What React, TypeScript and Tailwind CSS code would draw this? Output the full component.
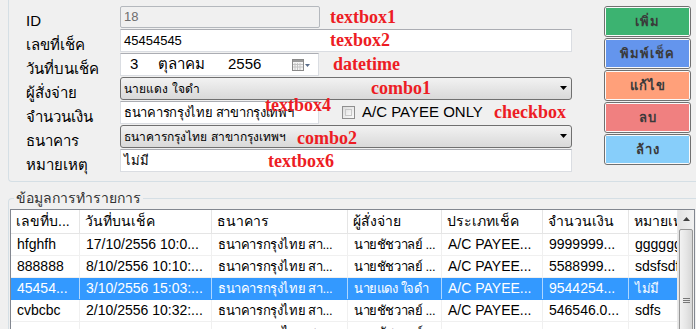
import { ReactNode } from 'react';

const FONT = { fontFamily: '"Liberation Sans", Tahoma, sans-serif' };

type Row = string[];

const columns = [
  { title: 'เลขที่บ...', w: 'w-[69px]' },
  { title: 'วันที่บนเช็ค', w: 'w-[132px]' },
  { title: 'ธนาคาร', w: 'w-[136px]' },
  { title: 'ผู้สั่งจ่าย', w: 'w-[94px]' },
  { title: 'ประเภทเช็ค', w: 'w-[101px]' },
  { title: 'จำนวนเงิน', w: 'w-[86px]' },
  { title: 'หมายเหตุ', w: 'w-[90px]' },
];

const rows: Row[] = [
  ['hfghfh', '17/10/2556 10:0...', 'ธนาคารกรุงไทย สา...', 'นายชัชวาลย์ ...', 'A/C PAYEE...', '9999999...', 'gggggg'],
  ['888888', '8/10/2556 10:10:...', 'ธนาคารกรุงไทย สา...', 'นายชัชวาลย์ ...', 'A/C PAYEE...', '5588999...', 'sdsfsdf'],
  ['45454...', '3/10/2556 15:03:...', 'ธนาคารกรุงไทย สา...', 'นายแดง ใจดำ', 'A/C PAYEE...', '9544254...', 'ไม่มี'],
  ['cvbcbc', '2/10/2556 10:32:...', 'ธนาคารกรุงไทย สา...', 'นายชัชวาลย์ ...', 'A/C PAYEE...', '546546.0...', 'sdfs'],
  ['', '', 'ธนาคารกรุงไทย สา...', 'นายชัชวาลย์ ...', '', '', ''],
];

const isThai = (s: string) => /[\u0E00-\u0E7F]/.test(s);

function FieldRow({ label, children }: { label: string; children: ReactNode }) {
  return (
    <div className="flex items-center h-[23px]">
      <div className="w-[94px] text-[15px] leading-[15px] pt-[7px] text-black whitespace-nowrap">{label}</div>
      {children}
    </div>
  );
}

function Combo({ text }: { text: string }) {
  return (
    <div className="w-[452px] h-[23px] flex items-center justify-between border border-[#707070] rounded-[3px] bg-gradient-to-b from-[#f2f2f2] to-[#d9d9d9] pl-[3px] pr-[3px]">
      <span className="text-[12px] text-black" style={{ fontFamily: 'Tahoma, "DejaVu Sans", sans-serif' }}>
        {text}
      </span>
      <svg width="8" height="5" viewBox="0 0 8 5">
        <path d="M0 0h7l-3.5 4z" fill="#000" />
      </svg>
    </div>
  );
}

function ActionButton({ label, color }: { label: string; color: string }) {
  return (
    <div className="h-[31px] border border-[#707070] rounded-[3px] p-[1px] bg-[#fafafa]">
      <div className={`h-full flex items-center justify-center ${color}`}>
        <span className="text-[13px] font-bold text-[#3a3a3a] tracking-[1px]">{label}</span>
      </div>
    </div>
  );
}

function Note({ text, className }: { text: string; className: string }) {
  return (
    <span
      className={`absolute text-[18px] leading-[18px] font-bold text-[#ed1c24] ${className}`}
      style={{ fontFamily: '"Liberation Serif", serif' }}
    >
      {text}
    </span>
  );
}

export default function App() {
  return (
    <div className="relative w-[696px] h-[329px] bg-[#f0f0f0] overflow-hidden" style={FONT}>
      {/* top group */}
      <div className="ml-[8px] h-[182px] border-l border-b border-[#d5dfe5] rounded-bl-[4px] flex pl-[17px] pt-[5px]">
        <div className="flex flex-col gap-[1px] w-[546px]">
          <FieldRow label="ID">
            <div className="w-[200px] h-[22px] border border-[#b4b8bd] rounded-[2px] bg-[#f0f0f0] flex items-center px-[3px] text-[13px] text-[#6d6d6d]">
              18
            </div>
          </FieldRow>
          <FieldRow label="เลขที่เช็ค">
            <div className="w-[452px] h-[23px] border border-[#dadde2] border-t-[#abadb3] bg-white flex items-center px-[3px] text-[13px] text-black">
              45454545
            </div>
          </FieldRow>
          <FieldRow label="วันที่บนเช็ค">
            <div className="w-[199px] h-[23px] border border-[#dadde2] border-t-[#abadb3] bg-white flex items-center pl-[9px] pr-[7px] text-[15px] text-black">
              <span className="w-[28px]">3</span>
              <span className="w-[70px]">ตุลาคม</span>
              <span>2556</span>
              <svg className="ml-auto" width="19" height="14" viewBox="0 0 19 14">
                <rect x="0.5" y="1.5" width="11" height="11" fill="#f4f4f4" stroke="#8a8a8a" />
                <rect x="1" y="2" width="10" height="2" fill="#9a9a9a" />
                <path d="M3 5v7M5.5 5v7M8 5v7M1 6.5h10M1 9h10" stroke="#c4c4c4" strokeWidth="1" />
                <path d="M13 6h5l-2.5 3z" fill="#5a6d8a" />
              </svg>
            </div>
          </FieldRow>
          <FieldRow label="ผู้สั่งจ่าย">
            <Combo text="นายแดง ใจดำ" />
          </FieldRow>
          <FieldRow label="จำนวนเงิน">
            <div className="w-[199px] h-[23px] border border-[#dadde2] border-t-[#abadb3] bg-white flex items-center px-[3px] text-[13px] tracking-[-0.3px] text-black whitespace-nowrap overflow-hidden">
              ธนาคารกรุงไทย สาขากรุงเทพฯ
            </div>
            <div className="flex items-center ml-[23px] gap-[7px]">
              <div className="w-[13px] h-[13px] border border-[#8f8f8f] bg-gradient-to-br from-[#dcdcdc] to-[#fbfbfb] p-[2px]">
                <div className="w-full h-full border border-[#c8c8c8] bg-gradient-to-br from-[#e6e6e6] to-[#f8f8f8]" />
              </div>
              <span className="text-[15px] text-black">A/C PAYEE ONLY</span>
            </div>
          </FieldRow>
          <FieldRow label="ธนาคาร">
            <Combo text="ธนาคารกรุงไทย สาขากรุงเทพฯ" />
          </FieldRow>
          <FieldRow label="หมายเหตุ">
            <div className="w-[452px] h-[23px] border border-[#dadde2] border-t-[#abadb3] bg-white flex items-center px-[3px] text-[13px] text-black">
              ไม่มี
            </div>
          </FieldRow>
        </div>

        <div className="ml-[32px] mt-[1px] w-[87px] flex flex-col gap-[1px]">
          <ActionButton label="เพิ่ม" color="bg-[#3cb371]" />
          <ActionButton label="พิมพ์เช็ค" color="bg-[#6495ed]" />
          <ActionButton label="แก้ไข" color="bg-[#ffa07a]" />
          <ActionButton label="ลบ" color="bg-[#f08080]" />
          <ActionButton label="ล้าง" color="bg-[#87cefa]" />
        </div>
      </div>

      {/* list group */}
      <fieldset className="mt-[8px] ml-[8px] border-t border-l border-[#d5dfe5] rounded-tl-[4px]">
        <legend className="ml-[5px] px-[2px] text-[14px] leading-[16px] text-[#333]">ข้อมูลการทำรายการ</legend>
        <div className="ml-[1px] mt-[3px] w-[685px] h-[130px] border border-[#828790] bg-white flex overflow-hidden">
          <div className="flex-1 overflow-hidden">
            <div className="flex h-[24px] border-b border-[#e5e5e5] bg-white">
              {columns.map((c) => (
                <div
                  key={c.title}
                  className={`${c.w} shrink-0 border-r border-[#e5e5e5] pl-[5px] flex items-center text-[14px] text-black whitespace-nowrap overflow-hidden`}
                >
                  {c.title}
                </div>
              ))}
            </div>
            {rows.map((r, i) => {
              const sel = i === 2;
              return (
                <div
                  key={i}
                  className={`flex h-[22px] border-b ${sel ? 'bg-[#3399ff] text-white border-[#3399ff]' : 'bg-white text-black border-[#f0f0f0]'}`}
                >
                  {r.map((cell, j) => (
                    <div
                      key={j}
                      className={`${columns[j].w} shrink-0 border-r ${sel ? 'border-white/60' : 'border-[#f0f0f0]'} pl-[6px] flex items-center whitespace-nowrap overflow-hidden ${isThai(cell) ? 'text-[13px] tracking-[-0.4px]' : 'text-[14px]'}`}
                    >
                      {cell}
                    </div>
                  ))}
                </div>
              );
            })}
          </div>

          {/* vertical scrollbar */}
          <div className="w-[17px] shrink-0 bg-gradient-to-r from-[#e3e3e3] to-[#f1f1f1] flex flex-col border-l border-[#e8e8e8]">
            <div className="h-[17px] flex items-center justify-center">
              <svg width="7" height="4" viewBox="0 0 7 4">
                <path d="M0 4h7L3.5 0z" fill="#404040" />
              </svg>
            </div>
            <div className="mt-[2px] mx-[1px] flex-1 border border-[#979797] rounded-[2px] bg-gradient-to-r from-[#f2f2f2] via-[#e6e6e6] to-[#d6d6d6] flex flex-col items-center pt-[68px]">
              <div className="w-[7px] h-[1px] bg-[#777]" />
              <div className="w-[7px] h-[1px] bg-[#777] mt-[1px]" />
              <div className="w-[7px] h-[1px] bg-[#777] mt-[1px]" />
            </div>
          </div>
        </div>
      </fieldset>

      {/* annotations */}
      <Note text="textbox1" className="left-[330px] top-[8px]" />
      <Note text="texbox2" className="left-[330px] top-[31px]" />
      <Note text="datetime" className="left-[333px] top-[55px]" />
      <Note text="combo1" className="left-[371px] top-[79px]" />
      <Note text="textbox4" className="left-[265px] top-[96px]" />
      <Note text="checkbox" className="left-[494px] top-[103px]" />
      <Note text="combo2" className="left-[297px] top-[129px]" />
      <Note text="textbox6" className="left-[268px] top-[152px]" />
    </div>
  );
}
